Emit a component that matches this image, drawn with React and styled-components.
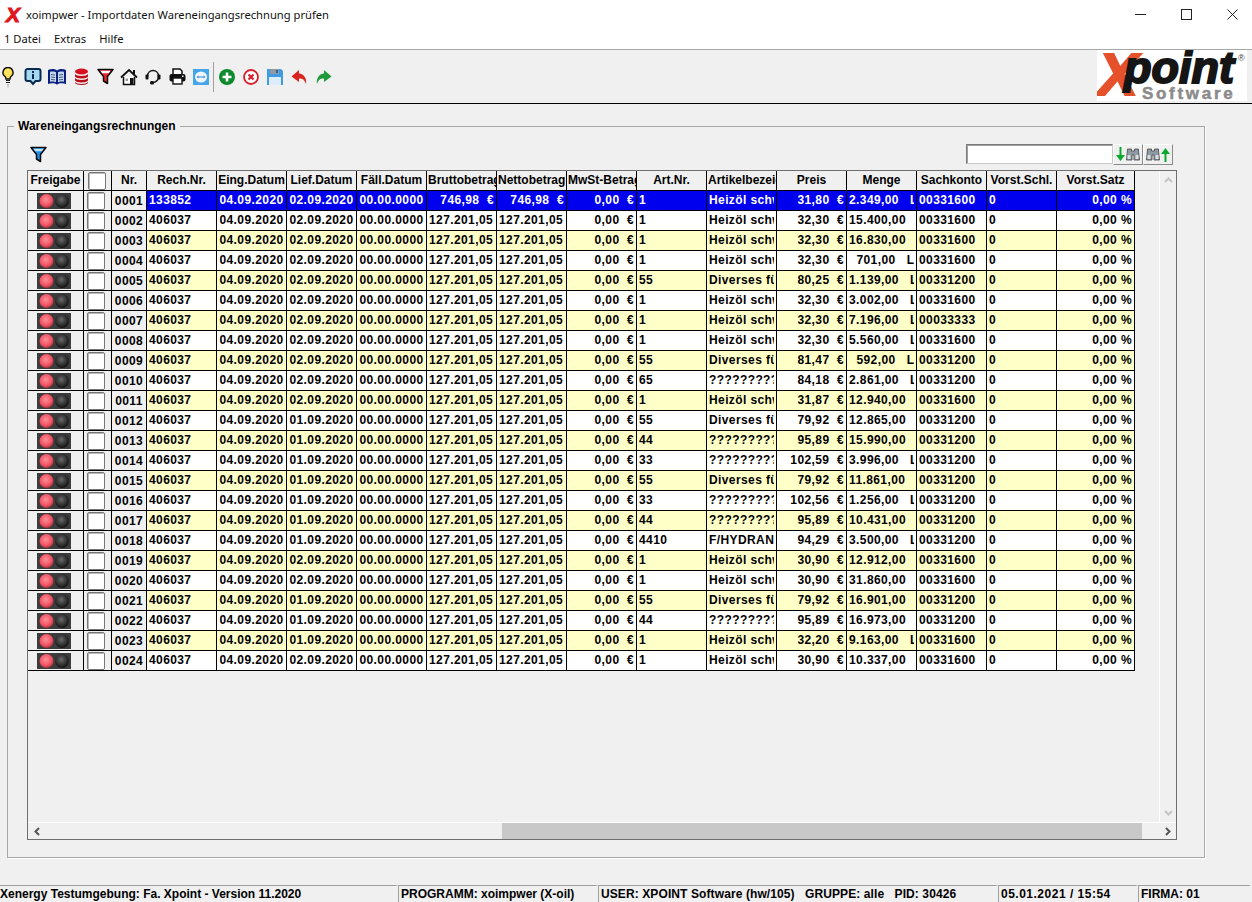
import styled, { createGlobalStyle } from "styled-components";

const GlobalStyle = createGlobalStyle`
  html, body {
    margin: 0;
    height: 100%;
    overflow: hidden;
    background: #f0f0f0;
  }
  #root {
    height: 100%;
  }
`;

// data
const heizoel = { art: "1", name: "Heizöl schwer" };
const diverses = { art: "55", name: "Diverses für" };
const fragen = (art) => ({ art, name: "?????????????" });
const hydrant = { art: "4410", name: "F/HYDRANT" };

const rows = [
  [heizoel, "31,80", "2.349,00", "00331600", "02"],
  [heizoel, "32,30", "15.400,00", "00331600", "02"],
  [heizoel, "32,30", "16.830,00", "00331600", "02"],
  [heizoel, "32,30", "  701,00", "00331600", "02"],
  [diverses, "80,25", "1.139,00", "00331200", "02"],
  [heizoel, "32,30", "3.002,00", "00331600", "02"],
  [heizoel, "32,30", "7.196,00", "00033333", "02"],
  [heizoel, "32,30", "5.560,00", "00331600", "02"],
  [diverses, "81,47", "  592,00", "00331200", "02"],
  [fragen("65"), "84,18", "2.861,00", "00331200", "02"],
  [heizoel, "31,87", "12.940,00", "00331600", "02"],
  [diverses, "79,92", "12.865,00", "00331200", "01"],
  [fragen("44"), "95,89", "15.990,00", "00331200", "01"],
  [fragen("33"), "102,59", "3.996,00", "00331200", "01"],
  [diverses, "79,92", "11.861,00", "00331200", "01"],
  [fragen("33"), "102,56", "1.256,00", "00331200", "01"],
  [fragen("44"), "95,89", "10.431,00", "00331200", "01"],
  [hydrant, "94,29", "3.500,00", "00331200", "01"],
  [heizoel, "30,90", "12.912,00", "00331600", "02"],
  [heizoel, "30,90", "31.860,00", "00331600", "02"],
  [diverses, "79,92", "16.901,00", "00331200", "01"],
  [fragen("44"), "95,89", "16.973,00", "00331200", "01"],
  [heizoel, "32,20", "9.163,00", "00331600", "01"],
  [heizoel, "30,90", "10.337,00", "00331600", "02"],
];

const columns = [
  ["Freigabe", 56],
  ["", 28],
  ["Nr.", 35],
  ["Rech.Nr.", 70],
  ["Eing.Datum", 70],
  ["Lief.Datum", 70],
  ["Fäll.Datum", 70],
  ["Bruttobetrag", 70, true],
  ["Nettobetrag", 70, true],
  ["MwSt-Betrag", 70, true],
  ["Art.Nr.", 70],
  ["Artikelbezeichnung", 70, true],
  ["Preis", 70],
  ["Menge", 70],
  ["Sachkonto", 70],
  ["Vorst.Schl.", 70],
  ["Vorst.Satz", 78],
];

// icons
const Bulb = () => (
  <svg width="14" height="22" viewBox="0 0 14 22">
    <path d="M7 1.500a5 5 0 0 1 3 9c-.7.6-1 1.400-1 2.500H5c0-1.100-.3-1.900-1-2.500a5 5 0 0 1 3-9z" fill="#ffe25a" stroke="#111" strokeWidth="1.500" />
    <path d="M5 14.500h4M5 16.500h4" stroke="#222" strokeWidth="1.200" />
    <path d="M6 19h2M6.500 21h1" stroke="#999" strokeWidth="1" />
  </svg>
);

const InfoBubble = () => (
  <svg width="18" height="20" viewBox="0 0 18 20">
    <path d="M3.500 2h11a2 2 0 0 1 2 2v8a2 2 0 0 1-2 2h-3l-2.500 3-2.500-3h-3a2 2 0 0 1-2-2V4a2 2 0 0 1 2-2z" fill="#a5d8ef" stroke="#0b2a52" strokeWidth="2" />
    <rect x="8" y="7" width="2" height="5" fill="#0b2a52" />
    <rect x="8" y="4" width="2" height="2" fill="#0b2a52" />
  </svg>
);

const Book = () => (
  <svg width="18" height="18" viewBox="0 0 18 18">
    <path d="M0 2c3-1.500 7-1.500 9 .5 2-2 6-2 9-.5v14c-3-1-7-1-9 .8-2-1.800-6-1.800-9-.8z" fill="#0b1f80" />
    <path d="M2 3.800c2-.6 4.800-.4 6 .5v10c-1.300-.8-4-1-6-.6zM16 3.800c-2-.6-4.800-.4-6 .5v10c1.300-.8 4-1 6-.6z" fill="#c3d6e8" />
    <path d="M3 6.500l4 .5M3 9l4 .5M3 11.500l4 .3M15 6.500l-4 .5M15 9l-4 .5M15 11.500l-4 .3" stroke="#38507c" strokeWidth=".9" />
  </svg>
);

const Database = () => (
  <svg width="15" height="18" viewBox="0 0 15 18">
    <ellipse cx="7.500" cy="3.500" rx="6.500" ry="3" fill="#d80f1e" />
    <path d="M1 6c1 2.500 12 2.500 13 0v2.500c-1 2.500-12 2.500-13 0z" fill="#c00a18" />
    <path d="M1 10c1 2.500 12 2.500 13 0v2.500c-1 2.500-12 2.500-13 0z" fill="#b80a18" />
    <path d="M1 14c1 2.500 12 2.500 13 0v1c-1 2.500-12 2.500-13 0z" fill="#a80a16" />
  </svg>
);

const Funnel = ({ color = "#e8242c", top = "#fff" }) => (
  <svg width="17" height="17" viewBox="0 0 17 17">
    <path d="M1 1.500h15L10.500 8.500v7l-4-2.500V8.500z" fill={color} stroke="#0a0a0a" strokeWidth="1.500" strokeLinejoin="round" />
    <path d="M3.500 2.800h10l-1.800 2.400H5.300z" fill={top} />
  </svg>
);

const House = () => (
  <svg width="18" height="18" viewBox="0 0 18 18">
    <path d="M1 9.500L9 2l8 7.500" fill="none" stroke="#111" strokeWidth="1.800" />
    <path d="M13 2h2v4h-2z" fill="#111" />
    <path d="M3.500 9v7.500h11V9" fill="#fff" stroke="#111" strokeWidth="1.500" />
    <rect x="10" y="10" width="3.500" height="6.500" fill="#111" />
    <rect x="5.500" y="10.500" width="2.500" height="2.500" fill="#999" />
  </svg>
);

const Headset = () => (
  <svg width="16" height="18" viewBox="0 0 16 18">
    <path d="M2.500 8.500C2.500 0.500 13.500 0.500 13.500 8.500C13.500 11.500 11.500 14 8 14.500" fill="none" stroke="#111" strokeWidth="1.500" />
    <rect x="0.500" y="6.500" width="3" height="5" rx="1" fill="#111" />
    <rect x="12.500" y="6.500" width="3" height="5" rx="1" fill="#111" />
    <rect x="5" y="13" width="4" height="3.500" rx="1.500" fill="#111" />
  </svg>
);

const Printer = () => (
  <svg width="17" height="17" viewBox="0 0 17 17">
    <path d="M4 1h7l2 2v4H4z" fill="#fff" stroke="#111" strokeWidth="1.500" />
    <rect x="0.500" y="6" width="16" height="7.500" rx="2" fill="#111" />
    <rect x="4" y="10" width="9" height="6" fill="#fff" stroke="#111" strokeWidth="1.400" />
    <rect x="13" y="7.500" width="1.500" height="1.500" fill="#fff" />
  </svg>
);

const RemoteHelp = () => (
  <svg width="16" height="16" viewBox="0 0 16 16">
    <rect width="16" height="16" fill="#45a5ea" />
    <ellipse cx="8" cy="8" rx="6" ry="5.500" fill="#f0f6fb" />
    <path d="M5 8h6" stroke="#3a8ccc" strokeWidth="1" />
    <path d="M3.500 8l2-1.500v3zM12.500 8l-2-1.500v3z" fill="#3a8ccc" />
  </svg>
);

const PlusRound = () => (
  <svg width="16" height="16" viewBox="0 0 16 16">
    <circle cx="8" cy="8" r="8" fill="#0d8a2c" />
    <path d="M8 3.500v9M3.500 8h9" stroke="#fff" strokeWidth="2.600" />
  </svg>
);

const CrossRound = () => (
  <svg width="16" height="16" viewBox="0 0 16 16">
    <circle cx="8" cy="8" r="7" fill="#fff" stroke="#d9202c" strokeWidth="1.800" />
    <path d="M5.500 5.500l5 5M10.500 5.500l-5 5" stroke="#d9202c" strokeWidth="2.200" />
  </svg>
);

const Disk = () => (
  <svg width="16" height="16" viewBox="0 0 16 16">
    <path d="M0 0h14l2 2v14H0z" fill="#3f9be4" />
    <rect x="3" y="0" width="9" height="5" fill="#8d9aa6" />
    <rect x="9" y="1" width="2" height="3" fill="#3f5f7f" />
    <rect x="2" y="8" width="12" height="8" fill="#dcecf8" />
  </svg>
);

const ArrowBack = ({ color, flip }) => (
  <svg width="17" height="16" viewBox="0 0 17 16" style={flip ? { transform: "scaleX(-1)" } : undefined}>
    <path d="M8 1L.5 7.500 8 13V9.500c3.500 0 5.500 1 7 5.500 1-5.500-2-10-7-10.500z" fill={color} />
  </svg>
);

const Binoculars = () => (
  <svg width="14" height="15" viewBox="0 0 14 15">
    <path d="M1.500 2h4v2h3V2h4v2l1 9H8V8H6v5H.5z" fill="#8e9aa3" stroke="#444" strokeWidth=".8" />
    <rect x="1.500" y="8" width="3" height="4" fill="#d6dde2" />
    <rect x="9.500" y="8" width="3" height="4" fill="#d6dde2" />
  </svg>
);

const GreenArrow = ({ up }) => (
  <svg width="9" height="15" viewBox="0 0 9 15" style={up ? { transform: "scaleY(-1)" } : undefined}>
    <path d="M3.500 0h2v8H9l-4.500 6L0 8h3.500z" fill="#0caa2c" />
  </svg>
);

const TrafficLight = () => (
  <svg width="34" height="16" viewBox="0 0 34 16">
    <defs>
      <radialGradient id="lampRed" cx=".45" cy=".4" r=".65">
        <stop offset="0" stopColor="#ff8f98" />
        <stop offset=".65" stopColor="#ee5262" />
        <stop offset="1" stopColor="#a02633" />
      </radialGradient>
      <radialGradient id="lampOff" cx=".45" cy=".4" r=".65">
        <stop offset="0" stopColor="#6a6a6a" />
        <stop offset=".6" stopColor="#303030" />
        <stop offset="1" stopColor="#0c0c0c" />
      </radialGradient>
    </defs>
    <rect width="34" height="16" fill="#3c3c3c" />
    <circle cx="9.500" cy="8" r="7" fill="url(#lampRed)" />
    <circle cx="25" cy="8" r="7" fill="url(#lampOff)" />
  </svg>
);

const Logo = () => (
  <svg width="150" height="51" viewBox="0 0 150 51">
    <rect width="150" height="51" fill="#fff" />
    <text x="1" y="45" fontFamily="Liberation Sans" fontWeight="700" fontStyle="italic" fontSize="60" fill="#e4512a" stroke="#e4512a" strokeWidth="2">X</text>
    <text x="27" y="33" fontFamily="Liberation Sans" fontWeight="700" fontStyle="italic" fontSize="45" fill="#151515" stroke="#151515" strokeWidth="2">point</text>
    <text x="45" y="49" fontFamily="Liberation Sans" fontWeight="700" fontSize="17" letterSpacing="2.700" fill="#8b8b8b" stroke="#8b8b8b" strokeWidth=".5">Software</text>
    <text x="141" y="11" fontFamily="Liberation Sans" fontSize="9" fill="#444">®</text>
  </svg>
);

const toolbarIcons = [
  <InfoBubble />,
  <Book />,
  <Database />,
  <Funnel />,
  <House />,
  <Headset />,
  <Printer />,
  <RemoteHelp />,
];

const editIcons = [
  <PlusRound />,
  <CrossRound />,
  <Disk />,
  <ArrowBack color="#d9231f" />,
  <ArrowBack color="#1f9a3a" flip />,
];

function App() {
  return (
    <Window>
      <GlobalStyle />
      <TitleBar>
        <TitleMark>X</TitleMark>
        <TitleText>xoimpwer - Importdaten Wareneingangsrechnung prüfen</TitleText>
        <WindowButton>
          <svg width="11" height="11" viewBox="0 0 11 11"><path d="M0 5.500h11" stroke="#222" /></svg>
        </WindowButton>
        <WindowButton>
          <svg width="11" height="11" viewBox="0 0 11 11"><rect x=".5" y=".5" width="10" height="10" fill="none" stroke="#222" /></svg>
        </WindowButton>
        <WindowButton>
          <svg width="11" height="11" viewBox="0 0 11 11"><path d="M.5.500l10 10M10.500.500l-10 10" stroke="#222" /></svg>
        </WindowButton>
      </TitleBar>
      <MenuBar>
        <MenuItem>1 Datei</MenuItem>
        <MenuItem>Extras</MenuItem>
        <MenuItem>Hilfe</MenuItem>
      </MenuBar>
      <Toolbar>
        <ToolSlot $width={16} $after={5}><Bulb /></ToolSlot>
        {toolbarIcons.map((icon, index) => (
          <ToolSlot key={index}>{icon}</ToolSlot>
        ))}
        <ToolSeparator />
        {editIcons.map((icon, index) => (
          <ToolSlot key={index}>{icon}</ToolSlot>
        ))}
        <LogoBox><Logo /></LogoBox>
      </Toolbar>
      <Main>
        <GroupBox>
          <GroupLegend>Wareneingangsrechnungen</GroupLegend>
          <FilterRow>
            <FilterButton><Funnel color="#1f8fe6" top="#bfe4fb" /></FilterButton>
            <SearchInput />
            <SearchButton><GreenArrow /><Binoculars /></SearchButton>
            <SearchButton><Binoculars /><GreenArrow up /></SearchButton>
          </FilterRow>
          <GridFrame>
            <TableArea>
              <Table>
                <colgroup>
                  {columns.map(([, width], index) => (
                    <col key={index} style={{ width }} />
                  ))}
                </colgroup>
                <thead>
                  <tr>
                    {columns.map(([label, , clip], index) => (
                      <HeadCell key={index} $clip={clip}>
                        {index === 1 ? <CheckBox /> : <CellClip>{label}</CellClip>}
                      </HeadCell>
                    ))}
                  </tr>
                </thead>
                <tbody>
                  {rows.map(([article, price, amount, account, deliveryDay], index) => {
                    const tone = index === 0 ? "selected" : index % 2 === 0 ? "yellow" : "white";
                    return (
                      <tr key={index}>
                        <FixedCell><LightBox><TrafficLight /></LightBox></FixedCell>
                        <FixedCell><CheckBox /></FixedCell>
                        <FixedCell $align="center">{String(index + 1).padStart(4, "0")}</FixedCell>
                        <DataCell $tone={tone}><CellClip>{index === 0 ? "133852" : "406037"}</CellClip></DataCell>
                        <DataCell $tone={tone} $align="center"><CellClip>04.09.2020</CellClip></DataCell>
                        <DataCell $tone={tone} $align="center"><CellClip>{deliveryDay}.09.2020</CellClip></DataCell>
                        <DataCell $tone={tone} $align="center"><CellClip>00.00.0000</CellClip></DataCell>
                        <DataCell $tone={tone} $align={index === 0 ? "right" : "left"}><CellClip>{index === 0 ? "746,98  €" : "127.201,05"}</CellClip></DataCell>
                        <DataCell $tone={tone} $align={index === 0 ? "right" : "left"}><CellClip>{index === 0 ? "746,98  €" : "127.201,05"}</CellClip></DataCell>
                        <DataCell $tone={tone} $align="right"><CellClip>0,00  €</CellClip></DataCell>
                        <DataCell $tone={tone}><CellClip>{article.art}</CellClip></DataCell>
                        <DataCell $tone={tone}><CellClip>{article.name}</CellClip></DataCell>
                        <DataCell $tone={tone} $align="right"><CellClip>{price}  €</CellClip></DataCell>
                        <DataCell $tone={tone}><CellClip>{amount}   Ltr</CellClip></DataCell>
                        <DataCell $tone={tone}><CellClip>{account}</CellClip></DataCell>
                        <DataCell $tone={tone}><CellClip>0</CellClip></DataCell>
                        <DataCell $tone={tone} $align="right"><CellClip>0,00 %</CellClip></DataCell>
                      </tr>
                    );
                  })}
                </tbody>
              </Table>
            </TableArea>
            <VerticalScroll>
              <svg width="9" height="6" viewBox="0 0 9 6"><path d="M1 5l3.500-3.500L8 5" fill="none" stroke="#c4c4c4" strokeWidth="2" /></svg>
              <svg width="9" height="6" viewBox="0 0 9 6"><path d="M1 1l3.500 3.500L8 1" fill="none" stroke="#c4c4c4" strokeWidth="2" /></svg>
            </VerticalScroll>
            <HorizontalScroll>
              <ScrollArrow>
                <svg width="6" height="9" viewBox="0 0 6 9"><path d="M5 1L1.500 4.500 5 8" fill="none" stroke="#555" strokeWidth="2" /></svg>
              </ScrollArrow>
              <ScrollTrack>
                <ScrollThumb />
              </ScrollTrack>
              <ScrollArrow>
                <svg width="6" height="9" viewBox="0 0 6 9"><path d="M1 1l3.500 3.500L1 8" fill="none" stroke="#555" strokeWidth="2" /></svg>
              </ScrollArrow>
            </HorizontalScroll>
          </GridFrame>
        </GroupBox>
      </Main>
      <StatusBar>
        <StatusPanel $width={398}>Xenergy Testumgebung: Fa. Xpoint - Version 11.2020</StatusPanel>
        <StatusPanel $width={200}>PROGRAMM: xoimpwer (X-oil)</StatusPanel>
        <StatusPanel $width={400} $spacing={0.1}>USER: XPOINT Software (hw/105)   GRUPPE: alle   PID: 30426</StatusPanel>
        <StatusPanel $width={140} $spacing={0.5}>05.01.2021 / 15:54</StatusPanel>
        <StatusPanel $width={113}>FIRMA: 01</StatusPanel>
      </StatusBar>
    </Window>
  );
}

const Window = styled.div`
  display: flex;
  flex-direction: column;
  width: 1252px;
  height: 902px;
  overflow: hidden;
  background: #f0f0f0;
  color: #000;
  font-family: "Liberation Sans", Arial, sans-serif;
`;
const TitleBar = styled.div`
  display: flex;
  align-items: center;
  flex: none;
  height: 28px;
  margin-right: -3px;
  padding-left: 6px;
  background: #fff;
`;
const TitleMark = styled.span`
  width: 20px;
  font-size: 21px;
  font-weight: 700;
  font-style: italic;
  line-height: 1;
  color: #e0141c;
  -webkit-text-stroke: 1px #e0141c;
`;
const TitleText = styled.span`
  flex: 1;
  font-family: "Noto Sans", sans-serif;
  font-size: 11.200px;
  color: #111;
`;
const WindowButton = styled.div`
  display: flex;
  justify-content: center;
  align-items: center;
  width: 46px;
  height: 28px;
`;
const MenuBar = styled.div`
  display: flex;
  flex: none;
  gap: 13px;
  align-items: center;
  height: 21px;
  padding-left: 4px;
  background: #fff;
`;
const MenuItem = styled.span`
  font-family: "Noto Sans", sans-serif;
  font-size: 11.200px;
  color: #111;
`;
const Toolbar = styled.div`
  display: flex;
  flex: none;
  align-items: center;
  box-sizing: border-box;
  height: 55px;
  border-top: 1px solid #a8a8a8;
  border-bottom: 1px solid #000;
`;
const ToolSlot = styled.div`
  display: flex;
  justify-content: center;
  align-items: center;
  flex: none;
  width: ${(props) => props.$width || 24}px;
  height: 24px;
  margin-right: ${(props) => props.$after || 0}px;
`;
const ToolSeparator = styled.div`
  flex: none;
  width: 1px;
  height: 30px;
  margin-right: 1px;
  background: #a0a0a0;
`;
const LogoBox = styled.div`
  display: flex;
  margin-left: auto;
  margin-right: 5px;
  margin-bottom: 2px;
`;
const Main = styled.div`
  flex: 1;
  min-height: 0;
  padding: 15px 0 0 7px;
`;
const GroupBox = styled.fieldset`
  box-sizing: border-box;
  width: 1198px;
  height: 739px;
  margin: 0;
  padding: 0 0 0 19px;
  border: 1px solid #a8a8a8;
  box-shadow: 1px 1px 0 #fff;
`;
const GroupLegend = styled.legend`
  margin-left: -13px;
  padding: 0 4px;
  font-size: 12px;
  font-weight: 700;
  line-height: 14px;
`;
const FilterRow = styled.div`
  display: flex;
  align-items: flex-start;
  height: 26px;
  margin-top: 11px;
  width: 1146px;
`;
const FilterButton = styled.div`
  display: flex;
  padding: 2px 0 0 3px;
  margin-right: auto;
`;
const SearchInput = styled.div`
  box-sizing: border-box;
  width: 147px;
  height: 20px;
  background: #fff;
  border: 1px solid #7a7a7a;
  border-right-color: #c8c8c8;
  border-bottom-color: #c8c8c8;
  box-shadow: inset 1px 1px 0 #a0a0a0;
`;
const SearchButton = styled.div`
  display: flex;
  justify-content: center;
  align-items: center;
  gap: 1px;
  box-sizing: border-box;
  width: 30px;
  height: 21px;
  background: #f0f0f0;
  border: 1px solid #fff;
  border-right-color: #8a8a8a;
  border-bottom-color: #8a8a8a;
`;
const GridFrame = styled.div`
  display: grid;
  grid-template-columns: 1fr 17px;
  grid-template-rows: 1fr 17px;
  box-sizing: border-box;
  width: 1150px;
  height: 670px;
  border: 1px solid #6e6e6e;
`;
const TableArea = styled.div`
  overflow: hidden;
  min-width: 0;
`;
const Table = styled.table`
  table-layout: fixed;
  width: 1107px;
  border-collapse: separate;
  border-spacing: 0;
`;
const HeadCell = styled.th`
  box-sizing: border-box;
  height: 20px;
  padding: 0 ${(props) => (props.$clip ? "0 0 1px" : "1px")};
  overflow: hidden;
  background: #f0f0f0;
  border-right: 1px solid #000;
  border-bottom: 1px solid #000;
  font-size: 12px;
  font-weight: 700;
  white-space: nowrap;
  text-align: ${(props) => (props.$clip ? "left" : "center")};
`;
const toneColors = {
  selected: "#0000ee",
  yellow: "#ffffc8",
  white: "#fff",
};
const DataCell = styled.td`
  box-sizing: border-box;
  height: 20px;
  padding: 0 2px;
  overflow: hidden;
  background: ${(props) => toneColors[props.$tone]};
  border-right: 1px solid #000;
  border-bottom: 1px solid #000;
  color: ${(props) => (props.$tone === "selected" ? "#fff" : "#000")};
  font-size: 12px;
  font-weight: 700;
  letter-spacing: 0.400px;
  text-align: ${(props) => props.$align || "left"};
`;
const FixedCell = styled(DataCell)`
  background: #f0f0f0;
  color: #000;
  padding: 0;
`;
const CellClip = styled.div`
  overflow: hidden;
  white-space: pre;
  line-height: 19px;
`;
const LightBox = styled.div`
  display: flex;
  justify-content: center;
  padding-right: 3px;
`;
const CheckBox = styled.div`
  box-sizing: border-box;
  width: 18px;
  height: 18px;
  margin: 0 0 0 3px;
  background: #fff;
  border: 1px solid #777;
  border-radius: 2px;
  box-shadow: inset 1px 1px 0 #bbb;
`;
const VerticalScroll = styled.div`
  display: flex;
  flex-direction: column;
  justify-content: space-between;
  align-items: center;
  padding: 6px 0;
  border-left: 1px solid #fff;
`;
const HorizontalScroll = styled.div`
  display: flex;
  grid-column: 1 / 3;
  border-top: 1px solid #fff;
`;
const ScrollArrow = styled.div`
  display: flex;
  flex: none;
  justify-content: center;
  align-items: center;
  width: 17px;
`;
const ScrollTrack = styled.div`
  flex: 1;
  padding-left: 457px;
  padding-right: 17px;
`;
const ScrollThumb = styled.div`
  height: 100%;
  background: #c8c8c8;
`;
const StatusBar = styled.div`
  display: flex;
  flex: none;
  height: 17px;
`;
const StatusPanel = styled.div`
  box-sizing: border-box;
  flex: none;
  width: ${(props) => props.$width}px;
  height: 17px;
  padding-left: 2px;
  overflow: hidden;
  border-top: 1px solid #a0a0a0;
  border-left: 1px solid #a0a0a0;
  border-right: 2px solid #f0f0f0;
  font-size: 12px;
  font-weight: 700;
  letter-spacing: ${(props) => props.$spacing || 0}px;
  line-height: 17px;
  white-space: pre;
  &:first-child {
    padding-left: 0;
    border-left: 0;
  }
`;

export default App;
